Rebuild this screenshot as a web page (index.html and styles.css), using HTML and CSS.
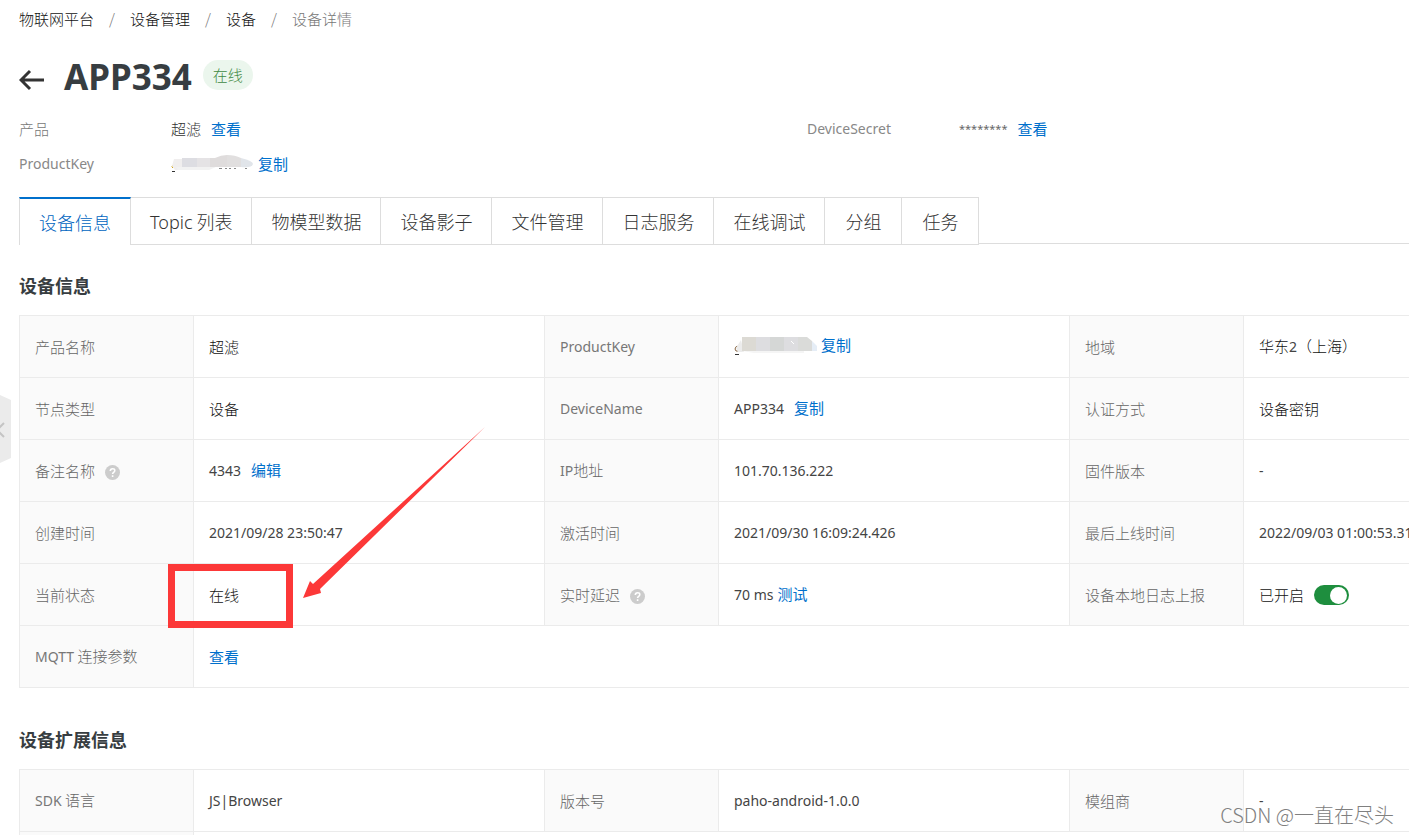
FILE: index.html
```
<!DOCTYPE html>
<html lang="zh-CN">
<head>
<meta charset="utf-8">
<title>设备详情</title>
<link rel="stylesheet" href="styles.css">
</head>
<body>
<div class="page">
  <nav class="breadcrumb">
    <a href="#">物联网平台</a><span class="sep">/</span><a href="#">设备管理</a><span class="sep">/</span><a href="#">设备</a><span class="sep">/</span><span class="current">设备详情</span>
  </nav>
  <header class="title-bar">
    <button class="back" type="button" aria-label="返回">
      <svg width="26" height="22" viewBox="0 0 26 22"><path d="M25 11H2M11 2L2 11l9 9" fill="none" stroke="#333" stroke-width="3"/></svg>
    </button>
    <h1>APP334</h1>
    <span class="badge">在线</span>
  </header>
  <dl class="meta">
    <div class="meta-item"><dt>产品</dt><dd>超滤<a href="#">查看</a></dd></div>
    <div class="meta-item"><dt class="latin">DeviceSecret</dt><dd><span class="secret">********</span><a href="#">查看</a></dd></div>
    <div class="meta-item"><dt class="latin">ProductKey</dt><dd class="tight">
      <svg class="mask" width="83" height="20" viewBox="0 0 83 20"><path d="M2 11q-2 2 0 3" stroke="#c90" fill="none"/><path d="M1 17.500h3" stroke="#333"/><path d="M48 14.500h3M54 14.500h2M58 14.500h2M63 14.500h2M74 14.500h2" stroke="#888" fill="none"/><path d="M3 5h9v11H4L1 12z" fill="#f0eeee"/><path d="M11 4h15v9H11z" fill="#dddde2"/><path d="M26 4h14v9H26z" fill="#e5e3e5"/><path d="M39 4h5q6-3 12-3v12H39z" fill="#dfdcdc"/><path d="M56 1q8 0 14 3v9H56z" fill="#e1dfdf"/><path d="M70 4q12 3 12 6q-1 4-12 3z" fill="#e1e5ea"/><path d="M5 13h40l-7 3H7z" fill="#f2f2f2"/></svg><a href="#">复制</a></dd></div>
  </dl>
  <div class="tabs" role="tablist">
    <button class="tab active" role="tab" aria-selected="true">设备信息</button>
    <button class="tab" role="tab"><span class="latin-tab">Topic</span> 列表</button>
    <button class="tab" role="tab">物模型数据</button>
    <button class="tab" role="tab">设备影子</button>
    <button class="tab" role="tab">文件管理</button>
    <button class="tab" role="tab">日志服务</button>
    <button class="tab" role="tab">在线调试</button>
    <button class="tab" role="tab">分组</button>
    <button class="tab" role="tab">任务</button>
  </div>
  <section class="panel">
    <h2>设备信息</h2>
    <table class="info">
      <colgroup><col class="c-label"><col><col class="c-label"><col><col class="c-label"><col></colgroup>
      <tbody>
      <tr><th>产品名称</th><td>超滤</td><th><span class="latin">ProductKey</span></th><td class="tight"><svg class="mask" width="83" height="24" viewBox="0 0 83 24"><path d="M5 11Q1 11 1 14t4 2" stroke="#864" fill="none"/><path d="M1 19.500h4" stroke="#333"/><path d="M7 5l-5 8 2 4h6z" fill="#ececec"/><path d="M8 2h14v14H8z" fill="#dcdad4"/><path d="M22 2h14v14H22z" fill="#dddde0"/><path d="M36 2h14v14H36z" fill="#d5d7d6"/><path d="M50 2h14v14H50z" fill="#dddde0"/><path d="M64 2h9l5 4v10H64z" fill="#dadbd9"/><path d="M78 6l5 5v5h-5z" fill="#e5edf6"/><path d="M8 16h62v2H20z" fill="#f5f5f5"/><path d="M57 6l3 3" stroke="#fff"/></svg><a href="#">复制</a></td><th>地域</th><td>华东<span class="latin">2</span>（上海）</td></tr>
      <tr><th>节点类型</th><td>设备</td><th><span class="latin">DeviceName</span></th><td><span class="latin">APP334</span><a href="#">复制</a></td><th>认证方式</th><td>设备密钥</td></tr>
      <tr><th>备注名称<span class="help"><svg width="15" height="15" viewBox="0 0 15 15"><circle cx="7.5" cy="7.5" r="7.5" fill="#ccc"/><path d="M5.3 6q0-2.3 2.3-2.3T9.8 5.6q0 1-1.1 1.7-1.1.7-1.1 1.7M7.6 10.2v1.700" fill="none" stroke="#fff" stroke-width="1.6"/></svg></span></th><td><span class="latin">4343</span><a href="#">编辑</a></td><th><span class="latin">IP</span>地址</th><td><span class="latin">101.70.136.222</span></td><th>固件版本</th><td><span class="latin">-</span></td></tr>
      <tr><th>创建时间</th><td><span class="latin">2021/09/28 23:50:47</span></td><th>激活时间</th><td><span class="latin">2021/09/30 16:09:24.426</span></td><th>最后上线时间</th><td><span class="latin">2022/09/03 01:00:53.312</span></td></tr>
      <tr><th>当前状态</th><td class="marked">在线
        <span class="mark-box"></span>
        <svg class="mark-arrow" width="184" height="172" viewBox="0 0 184 172"><path d="M0 171L7 154l3 3L182 0 17 162l1 4z" fill="#fc3838"/></svg></td><th>实时延迟<span class="help"><svg width="15" height="15" viewBox="0 0 15 15"><circle cx="7.5" cy="7.5" r="7.5" fill="#ccc"/><path d="M5.3 6q0-2.3 2.3-2.3T9.8 5.6q0 1-1.1 1.7-1.1.7-1.1 1.7M7.6 10.2v1.700" fill="none" stroke="#fff" stroke-width="1.6"/></svg></span></th><td class="tight"><span class="latin">70 ms</span><a href="#">测试</a></td><th>设备本地日志上报</th><td><label class="toggle">已开启<input type="checkbox" role="switch" checked></label></td></tr>
      <tr><th><span class="latin">MQTT</span> 连接参数</th><td class="tight" colspan="5"><a class="first" href="#">查看</a></td></tr>
      </tbody>
    </table>
  </section>
  <section class="panel">
    <h2>设备扩展信息</h2>
    <table class="info">
      <colgroup><col class="c-label"><col><col class="c-label"><col><col class="c-label"><col></colgroup>
      <tbody>
      <tr><th><span class="latin">SDK</span> 语言</th><td><span class="latin">JS|Browser</span></td><th>版本号</th><td><span class="latin">paho-android-1.0.0</span></td><th>模组商</th><td><span class="latin">-</span></td></tr>
      <tr><th></th><td colspan="5"></td></tr>
      </tbody>
    </table>
  </section>
  <button class="handle" type="button" aria-label="展开侧栏">
    <svg width="11" height="68" viewBox="0 0 11 68"><path d="M0 0l11 5v58L0 68z" fill="#ebebeb"/><path d="M4 28l-7 7 7 7" fill="none" stroke="#c4c4c4" stroke-width="2"/></svg>
  </button>
  <div class="watermark">CSDN @一直在尽头</div>
</div>
</body>
</html>
```
FILE: styles.css
```
* { box-sizing: border-box; }
body {
  margin: 0;
  background: #fff;
  color: #111;
  font: 300 15px/20px "Noto Sans CJK SC", sans-serif;
}
button { font: inherit; color: inherit; border: 0; padding: 0; background: none; cursor: pointer; }
a { color: #0070cc; font-weight: 400; text-decoration: none; }
svg { display: block; }
.page { position: relative; height: 100vh; padding: 9px 0 0 19px; overflow: hidden; }
.latin { font-family: "Noto Sans", sans-serif; font-size: 14px; font-weight: 400; }
td .latin { color: #444; }
.latin-tab { font-family: "Noto Sans", sans-serif; font-size: 18px; }
.secret { font-family: "Noto Sans", sans-serif; font-size: 11px; font-weight: 400; color: #666; }

.breadcrumb { display: flex; }
.breadcrumb a { color: #111; font-weight: 300; }
.breadcrumb .sep { width: 36px; text-align: center; color: #777; }
.breadcrumb .current { color: #777; }

.title-bar { display: flex; align-items: center; height: 50px; margin-top: 23px; padding-bottom: 2px; }
.back { padding-top: 8px; }
h1 { margin: 2px 11px 0 19px; font: 700 35px/48px "Noto Sans", sans-serif; color: #373d41; }
.badge { height: 30px; padding: 0 10px; margin-bottom: 3px; border-radius: 15px; background: #ebf6ed; color: #3f8a43; line-height: 30px; }

.meta { display: grid; grid-template-columns: 1fr 1fr; min-width: 1576px; margin: 9px 0 16px; }
.meta-item { display: flex; align-items: center; height: 35px; }
.meta dt { width: 152px; color: #777; }
.meta dt.latin { color: #888; }
.meta dd { display: flex; align-items: center; margin: 0; color: #333; }
.meta a, .info a { margin-left: 10px; }
.meta .tight a, .info .tight a { margin-left: 4px; }
.info .tight .first { margin-left: 0; }

.tabs { display: flex; min-width: 1576px; box-shadow: inset 0 -1px #ddd; }
.tab {
  height: 48px;
  min-width: 77px;
  margin-bottom: -1px;
  padding: 0 19px;
  border: solid #ddd;
  border-width: 1px 1px 1px 0;
  background: #fff;
  color: #333;
  font-size: 18px;
}
.tab.active { border-width: 2px 1px 0; border-top-color: #0070cc; color: #0064c0; }

.panel { margin-top: 28px; }
.panel + .panel { margin-top: 38px; }
h2 { margin: 0 0 17px; font-size: 18px; font-weight: 700; line-height: 26px; color: #373d41; }

.info { width: 100%; min-width: 1576px; border-collapse: collapse; table-layout: fixed; }
.c-label { width: 174px; }
.info th, .info td { height: 62px; padding: 0 15px; border: 1px solid #ebebeb; text-align: left; font-weight: 300; white-space: nowrap; }
.info th { background: #fafafa; color: #666; }
.info th .latin { color: #777; }
.info svg { display: inline-block; vertical-align: middle; }
.help { margin-left: 10px; }

.toggle { display: flex; align-items: center; gap: 10px; }
.toggle input { appearance: none; width: 35px; height: 20px; margin: 0; padding: 2px; border-radius: 10px; background: #1e8e3e; cursor: pointer; }
.toggle input::before { content: ""; display: block; width: 17px; height: 17px; border-radius: 50%; background: #fff; }
.toggle input:checked::before { margin-left: 14px; }

/* Callout around the status value */
.info .marked { position: relative; }
.mark-box { position: absolute; left: -26px; top: 0; width: 125px; height: 64px; border: 7px solid #fc3838; }
.info .mark-arrow { position: absolute; left: 109px; bottom: 26px; }

.handle { position: absolute; left: 0; top: 395px; }
.watermark { position: absolute; right: 15px; bottom: 6px; color: #808080; font-size: 20px; line-height: 28px; }
```
